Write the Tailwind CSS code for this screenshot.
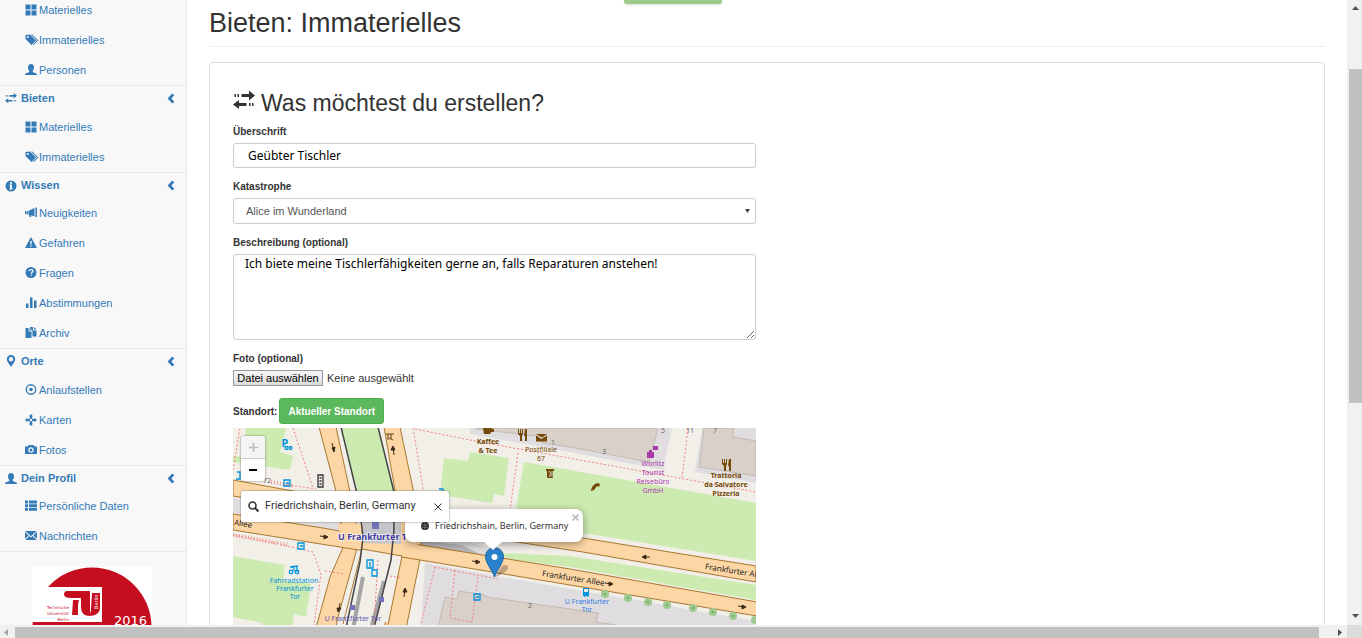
<!DOCTYPE html>
<html lang="de">
<head>
<meta charset="utf-8">
<title>Bieten: Immaterielles</title>
<script src="https://cdn.jsdelivr.net/npm/@tailwindcss/browser@4"></script>
</head>
<body class="flex h-screen flex-col overflow-hidden bg-white font-['Liberation_Sans',Arial,sans-serif] text-[11px] text-[#333]">

<svg class="hidden" aria-hidden="true">
  <symbol id="grid" viewBox="0 0 12 12"><path d="M.5.500h5v5h-5zM6.500.500h5v5h-5zM.5 6.500h5v5h-5zM6.500 6.500h5v5h-5z"/></symbol>
  <symbol id="tags" viewBox="0 0 14 12"><path fill-rule="evenodd" d="M.5 1 5 .5l6 6L6.500 11 .5 5zM2.700 2a1 1 0 1 0 .1 0z"/><path d="M6 .500h1.300l6 6L8.800 11l-.8-.6 3.900-3.900z"/></symbol>
  <symbol id="user" viewBox="0 0 12 12"><path d="M6 0C8 0 9 1.400 9 3.400 9 5 8.200 6.200 7.700 7v1l3.600 1.600c.5.300.7.800.7 1.400H0c0-.6.200-1.100.7-1.400L4.300 8V7C3.800 6.200 3 5 3 3.400 3 1.400 4 0 6 0z"/></symbol>
  <symbol id="transfer" viewBox="0 0 22 18"><path d="M1.500 3.500h1.500v3H1.500zM4.500 3.500H6v3H4.500zM8.500 3.500H16V0l6 5-6 5V6.500H8.500zM20.500 12.500H19v3h1.500zM17.500 12.500H16v3h1.500zM13.500 12.500H6V9.500L0 14l6 4.500v-3h7.500z"/></symbol>
  <symbol id="info" viewBox="0 0 12 12"><path fill-rule="evenodd" d="M6 .5a5.500 5.500 0 1 1 0 11 5.500 5.500 0 0 1 0-11zM5 2v1.700h2V2zM4.300 4.600v1H5v2.900h-.7v1h3.400v-1H7V4.600z"/></symbol>
  <symbol id="horn" viewBox="0 0 12 12"><path d="M0 4h1v3H0zM1.500 4H3v3.500H1.500zM3.500 3.700 9.500 1v8.500L6 8.300 6.300 10H4.600L4 7.500h-.5zM10.500.500H12V10h-1.500z"/></symbol>
  <symbol id="warn" viewBox="0 0 12 12"><path fill-rule="evenodd" d="M6 0 12 11H0zM5.200 4l.3 3.700h1l.3-3.700zM5.300 8.500v1.300h1.400V8.500z"/></symbol>
  <symbol id="quest" viewBox="0 0 12 12"><circle cx="6" cy="5.500" r="5.500"/><path d="M4 4.300C4 2 8 2 8 4c0 1.300-1.800 1.300-1.800 2.800M5.700 8.300h1" fill="none" stroke="#f8f8f8" stroke-width="1.300"/></symbol>
  <symbol id="bars" viewBox="0 0 12 12"><path d="M1 6.500h2.500V11H1zM5 .500h2.500V11H5zM9 3.500h2.500V11H9z"/></symbol>
  <symbol id="dup" viewBox="0 0 12 12"><path d="M.5 1h3v3.500h3V11h-6zM4.300 1l2.200 2.500H4.300zM5 0h3v3.500h3.500V9.500h-4V4L5 1zM9 0l2.500 2.500H9z"/></symbol>
  <symbol id="pin" viewBox="0 0 12 12"><path fill-rule="evenodd" d="M6 0a4.200 4.200 0 0 1 4.200 4.200C10.200 7 7 9.500 6 12 5 9.500 1.800 7 1.800 4.200A4.200 4.200 0 0 1 6 0zm0 2a2.200 2.200 0 1 0 0 4.400A2.200 2.200 0 0 0 6 2z"/></symbol>
  <symbol id="record" viewBox="0 0 12 12"><circle cx="6" cy="5.500" r="4.700" fill="none" stroke="currentColor" stroke-width="1.400"/><circle cx="6" cy="5.500" r="1.800"/></symbol>
  <symbol id="move" viewBox="0 0 12 12"><path fill-rule="evenodd" d="M6 0 8.200 2.400H7V4a2.500 2.500 0 0 1 1 1h1.600V3.800L12 6 9.600 8.200V7H8a2.500 2.500 0 0 1-1 1v1.600h1.200L6 12 3.800 9.600H5V8a2.500 2.500 0 0 1-1-1H2.400v1.200L0 6l2.400-2.200V5H4a2.500 2.500 0 0 1 1-1V2.400H3.800zM6 4.800a1.200 1.200 0 1 0 0 2.400 1.200 1.200 0 0 0 0-2.400z"/></symbol>
  <symbol id="camera" viewBox="0 0 12 12"><path fill-rule="evenodd" d="M0 2.500h2.500L3.700 1h4.600l1.200 1.500H12V10H0zM6 3.300a2.700 2.700 0 1 0 0 5.400 2.700 2.700 0 0 0 0-5.400zM6 4.500a1.500 1.500 0 1 1 0 3 1.500 1.500 0 0 1 0-3z"/></symbol>
  <symbol id="list" viewBox="0 0 12 12"><path d="M0 .500h3v3H0zM4 .500h8v3H4zM0 4.200h3V7H0zM4 4.200h8V7H4zM0 7.700h3v3H0zM4 7.700h8v3H4z"/></symbol>
  <symbol id="mail" viewBox="0 0 12 12"><path d="M.3 1h11.400L6 6.300zM0 2l3.700 3.400L0 8.700zM12 2 8.300 5.400 12 8.700zM4.400 6 6 7.500 7.600 6l4.100 4H.3z"/></symbol>
  <symbol id="chev" viewBox="0 0 8 12"><path d="M6.500 1.500 2.300 6l4.200 4.500" fill="none" stroke="currentColor" stroke-width="3"/></symbol>
</svg>

<div class="flex min-h-0 flex-1">
  <nav class="w-[187px] shrink-0 overflow-hidden border-r border-[#e7e7e7] bg-[#f8f8f8] text-[#337ab7]">
    <ul class="-mt-[5px]">
      <li><a href="#" class="flex h-[30px] items-center gap-[2px] pl-[25px]"><svg class="size-3 fill-current"><use href="#grid"/></svg>Materielles</a></li>
      <li><a href="#" class="flex h-[30px] items-center pl-[25px]"><svg class="h-3 w-[14px] fill-current"><use href="#tags"/></svg>Immaterielles</a></li>
      <li><a href="#" class="flex h-[30px] items-center gap-[2px] pl-[25px]"><svg class="size-3 fill-current"><use href="#user"/></svg>Personen</a></li>
    </ul>
    <section class="border-t border-[#e7e7e7]">
      <a href="#" class="flex h-[26px] items-center gap-1 pr-[11px] pb-[2px] pl-[5px] font-bold"><svg class="size-3 fill-current"><use href="#transfer"/></svg>Bieten<svg class="ml-auto h-[11px] w-2"><use href="#chev"/></svg></a>
      <ul>
        <li><a href="#" class="flex h-[30px] items-center gap-[2px] pl-[25px]"><svg class="size-3 fill-current"><use href="#grid"/></svg>Materielles</a></li>
        <li><a href="#" class="flex h-[30px] items-center pl-[25px]"><svg class="h-3 w-[14px] fill-current"><use href="#tags"/></svg>Immaterielles</a></li>
      </ul>
    </section>
    <section class="border-t border-[#e7e7e7]">
      <a href="#" class="flex h-[25px] items-center gap-1 pr-[11px] pl-[5px] font-bold"><svg class="size-3 fill-current"><use href="#info"/></svg>Wissen<svg class="ml-auto h-[11px] w-2"><use href="#chev"/></svg></a>
      <ul>
        <li><a href="#" class="flex h-[30px] items-center gap-[2px] pl-[25px]"><svg class="size-3 fill-current"><use href="#horn"/></svg>Neuigkeiten</a></li>
        <li><a href="#" class="flex h-[30px] items-center gap-[2px] pl-[25px]"><svg class="size-3 fill-current"><use href="#warn"/></svg>Gefahren</a></li>
        <li><a href="#" class="flex h-[30px] items-center gap-[2px] pl-[25px]"><svg class="size-3 fill-current"><use href="#quest"/></svg>Fragen</a></li>
        <li><a href="#" class="flex h-[30px] items-center gap-[2px] pl-[25px]"><svg class="size-3 fill-current"><use href="#bars"/></svg>Abstimmungen</a></li>
        <li><a href="#" class="flex h-[30px] items-center gap-[2px] pl-[25px]"><svg class="size-3 fill-current"><use href="#dup"/></svg>Archiv</a></li>
      </ul>
    </section>
    <section class="border-t border-[#e7e7e7]">
      <a href="#" class="flex h-[26px] items-center gap-1 pr-[11px] pb-[2px] pl-[5px] font-bold"><svg class="size-3 fill-current"><use href="#pin"/></svg>Orte<svg class="ml-auto h-[11px] w-2"><use href="#chev"/></svg></a>
      <ul>
        <li><a href="#" class="flex h-[30px] items-center gap-[2px] pl-[25px]"><svg class="size-3 fill-current"><use href="#record"/></svg>Anlaufstellen</a></li>
        <li><a href="#" class="flex h-[30px] items-center gap-[2px] pl-[25px]"><svg class="size-3 fill-current"><use href="#move"/></svg>Karten</a></li>
        <li><a href="#" class="flex h-[30px] items-center gap-[2px] pl-[25px]"><svg class="size-3 fill-current"><use href="#camera"/></svg>Fotos</a></li>
      </ul>
    </section>
    <section class="border-y border-[#e7e7e7]">
      <a href="#" class="flex h-[25px] items-center gap-1 pr-[11px] pl-[5px] font-bold"><svg class="size-3 fill-current"><use href="#user"/></svg>Dein Profil<svg class="ml-auto h-[11px] w-2"><use href="#chev"/></svg></a>
      <ul>
        <li><a href="#" class="flex h-[30px] items-center gap-[2px] pl-[25px]"><svg class="size-3 fill-current"><use href="#list"/></svg>Persönliche Daten</a></li>
        <li><a href="#" class="flex h-[30px] items-center gap-[2px] pl-[25px]"><svg class="size-3 fill-current"><use href="#mail"/></svg>Nachrichten</a></li>
      </ul>
    </section>
    <svg class="mt-[15px] ml-8 h-[120px] w-[120px]" viewBox="0 0 120 120" role="img" aria-label="Technische Universität Berlin 2016">
      <rect width="120" height="120" fill="#fff"/>
      <circle cx="60" cy="60" r="59.500" fill="#c50e1f"/>
      <path d="M0 20h70v35H0z" fill="#fff"/>
      <path d="M35 24h23v25q-9 0-9-9V31h-9q-8 0-8-3.500Q32 24 35 24zM41 33h6q-1 3-1 6v9h-6zM60 26h8v14q0 9-12 9 3-2 3-7z" fill="#c50e1f"/>
      <g fill="#c50e1f" font-family="DejaVu Sans, sans-serif" font-size="4" text-anchor="end"><text x="37" y="42">Technische</text><text x="37" y="48">Universität</text><text x="37" y="54">Berlin</text></g>
      <text transform="translate(66 42) rotate(-90)" font-size="5" fill="#fff" font-family="DejaVu Sans, sans-serif">Berlin</text>
      <text x="82" y="58" font-size="13" fill="#fff" font-family="DejaVu Sans, sans-serif">2016</text>
    </svg>
  </nav>

  <main class="relative min-w-0 flex-1 overflow-hidden px-[22px]">
    <div class="absolute top-0 left-[437px] h-1 w-[98px] rounded-b-[3px] bg-[#9ccb8c] shadow"></div>
    <h1 class="flex h-[47px] items-center border-b border-[#eee] text-[27px]">Bieten: Immaterielles</h1>
    <div class="mt-[15px] rounded-[4px] border border-[#ddd] px-[23px] pt-[24px] pb-6">
      <form class="max-w-[523px]" onsubmit="return false">
        <h2 class="flex h-8 items-center gap-[6px] text-[23px]"><svg class="-mt-2 h-[19px] w-[22px] fill-current"><use href="#transfer"/></svg>Was möchtest du erstellen?</h2>

        <label for="title" class="flex h-6 items-center text-[10px] font-bold">Überschrift</label>
        <input id="title" type="text" value="Geübter Tischler" class="block h-[25px] w-full rounded-[3px] border border-[#ccc] px-[14px] font-['Noto_Sans',sans-serif] text-[12px] text-black">

        <label for="kat" class="mt-[6px] flex h-6 items-center text-[10px] font-bold">Katastrophe</label>
        <div class="relative">
          <select id="kat" class="block h-[26px] w-full appearance-none rounded-[3px] border border-[#ccc] bg-white px-3 text-[#555]"><option>Alice im Wunderland</option></select>
          <svg class="pointer-events-none absolute top-[11px] right-[6px] h-[4px] w-[5px]" viewBox="0 0 5 4"><path d="M0 0h5L2.500 4z" fill="#444"/></svg>
        </div>

        <label for="desc" class="mt-[6px] flex h-6 items-center text-[10px] font-bold">Beschreibung (optional)</label>
        <textarea id="desc" class="block h-[86px] w-full rounded-[3px] border border-[#ccc] px-[11px] py-0 font-['Noto_Sans',sans-serif] text-[12px] leading-[17px] text-black">Ich biete meine Tischlerfähigkeiten gerne an, falls Reparaturen anstehen!</textarea>

        <label for="foto" class="mt-[6px] flex h-6 items-center text-[10px] font-bold">Foto (optional)</label>
        <div class="flex h-4 items-center gap-1">
          <input id="foto" type="file" class="sr-only">
          <button type="button" onclick="document.getElementById('foto').click()" class="h-4 w-[90px] border border-[#999] bg-linear-to-b from-[#f6f6f6] to-[#dcdcdc] leading-[14px] whitespace-nowrap text-black">Datei auswählen</button>
          <span>Keine ausgewählt</span>
        </div>

        <div class="mt-3 flex items-center gap-[2px] text-[10px] font-bold">
          <span>Standort:</span>
          <button type="button" class="h-[26px] rounded-[3px] border border-[#4cae4c] bg-[#5cb85c] px-2 text-white">Aktueller Standort</button>
        </div>

        <div class="relative mt-1 h-[300px] w-full overflow-hidden bg-[#f2efe9]">
          <svg class="block h-[300px] w-[523px]" viewBox="233 428 523 300" font-family="Noto Sans, sans-serif" text-anchor="middle">
            <g fill="#cdebb0">
              <path d="M246 428h40l-6 24 13 4-3 14-57-8v-6l10 1zM341 428h37l17 64h-37zM444 458l24 3 2-9 39 6-5 38-10-2-2 9-52-8zM524 462l46 8 186 33v58l-173-28-67-25zM500 553l70 3 186 29v15l-186-33-70-9zM233 556l52 9-2 15 28 4-5 33-12-3-2 14h-30v-5l-29-6zM233 499l30 4v3l-30-5z"/>
            </g>
            <g fill="#dfdde0">
              <path d="M470 428h202l-9 42-93-18-100-18zM702 428h54v55l-61-11zM425 563l65 12 266 46v107H415zM233 498l127 24v16l-127-25zM380 528l60 6 50 14v8l-90-14zM350 515h58v30h-58z"/>
            </g>
            <g fill="#bab9bd"><path d="M353 492h48v28h-48zM417 540l45 5 20 10-65-8z"/></g>
            <g fill="#d9d0c9" stroke="#bfb3aa" stroke-width=".8">
              <path d="M478 428h180l-9 34-79-15-28-4 2-6-68-8zM704 428h29v9l23 4v35l-57-9zM445 597l12 2 2-8 25 4 3 2 111 16-2 9 20 3-3 103H415z"/>
            </g>
            <g fill="#fcd6a4" stroke="#a06b1f" stroke-width=".9">
              <path d="M319 427h17l19 88 3 30-20 72-8 40h-22l22-80 14-32-7-50zM384 427h16l13 62 9 60-15 75-8 40h-22l16-80 9-38-6-50z"/>
              <path d="M233 480l120 22 60 13 170 23 173 28v16l-173-30-180-27-170-29z"/>
              <path d="M233 514l90 14 60 11 187 30 187 33v14l-187-31-180-30-157-25z"/>
            </g>
            <path d="M337 524h79l2 24-73-1z" fill="#fcd6a4"/>
            <path d="M364 494h37v50l-39-1z" fill="#c6c5c9"/>
            <path d="M362 549l40 7-14 66h-35l-5-4z" fill="#f2efe9"/>
            <path d="M343 624l19-75 40 7-14 69" fill="none" stroke="#a06b1f" stroke-width=".9"/>
            <g fill="none" stroke="#a6a5a5" stroke-width="4"><path d="M363 577l-10 52M384 581l-13 48"/></g>
            <g fill="none" stroke="#444" stroke-width="1.500">
              <path d="M341 427l18 75 4 35-3 25-14 66M378 427l16 65v38l-3 30-17 68"/>
            </g>
            <g fill="none" stroke="#f48080" stroke-width="1" stroke-dasharray="2 2">
              <path d="M293 428l20 60M233 470l7-42M283 484l33 5M413 428l12 72M415 429l60 12 281 51M518 453l-8 57M688 428l-6 50M233 535l50 10 30 7 8 22-7 51M325 571l20 3M434 567l64 12M435 567l-15 60M478 577l-6 45M455 570l-5 48 22 4M390 576l12 2M378 560l-4 65"/>
            </g>
            <path d="M271 482l22 4M233 535l56 10" stroke="#e99" stroke-width="4" stroke-dasharray="1 2" fill="none"/>
            <g fill="#7472b8"><path d="M372 522h7v7h-7zM350 605h5v5h-5zM379 597h5v5h-5z"/></g>
            <g fill="#9cca8f"><circle cx="605" cy="594" r="4"/><circle cx="628" cy="598" r="4"/><circle cx="648" cy="602" r="4"/><circle cx="667" cy="605" r="4"/><circle cx="693" cy="608" r="4"/><circle cx="713" cy="612" r="4"/><circle cx="733" cy="616" r="4"/><circle cx="755" cy="620" r="4"/></g>
            <g fill="#6b9c62"><circle cx="605" cy="594" r="1"/><circle cx="628" cy="598" r="1"/><circle cx="648" cy="602" r="1"/><circle cx="667" cy="605" r="1"/><circle cx="693" cy="608" r="1"/><circle cx="713" cy="612" r="1"/><circle cx="733" cy="616" r="1"/></g>
            <!-- one-way arrows -->
            <g stroke="#3a2a16" fill="#3a2a16" stroke-width="1">
              <path d="M332 443l2 8m-2-3l2 4 1-5zM394 455l-1-8m-2 3l2-4 2 4zM320 536l7 1m-3-2l4 2-4 2zM340 603l-1 8m-2-3l1 4 3-4zM404 597l1-8m-2 3l2-4 2 4zM472 561l7 1m-3-2l4 2-4 2zM650 557h-7m3-2l-4 2 4 2zM605 583l7 1m-3-2l4 2-4 2zM738 606l7 1m-3-2l4 2-4 2z"/>
            </g>
            <!-- points of interest -->
            <g fill="#734a08">
              <path d="M483 428h9v1h2v3h-3l-1 2h-6zM518 429h1v4h1v-4h1v4h1v-4h1v5l-1 2v5h-2v-5l-2-2zM525 429h2v12h-2v-5h-1zM536 434h11l-5 3.500zM536 435.500l5.500 3.500 5.500-3.500v6h-11zM722 459h1v4h1v-4h1v4h1v-4h1v5l-1 2v5h-2v-5l-2-2zM729 459h2v12h-2v-5h-1zM546 469h8v2h-1v7h-6v-7h-1zM591 490q1-5 6-7l3 1-1 3-2-1-3 4-3 1z"/>
              <path d="M549 471l2 3-2 3M552 471v6" stroke="#f2efe9" stroke-width=".8" fill="none"/>
              <g font-size="7" font-weight="bold"><text x="488" y="444">Kaffee</text><text x="488" y="453">&amp; Tee</text><text x="726" y="478">Trattoria</text><text x="726" y="487">da Salvatore</text><text x="726" y="496">Pizzeria</text></g>
              <g font-size="7"><text x="541" y="452">Postfiliale</text><text x="541" y="461">67</text></g>
            </g>
            <path d="M318 475h5v12h-5zM319.500 478h2M319.500 481h2M319.500 484h2" fill="none" stroke="#333" stroke-width="1.300"/>
            <path d="M386 434h8M388 434v6M391 434v5M389 438l4 2" stroke="#633d12" fill="none"/>
            <g fill="#ac39ac"><path d="M647 452h7v6h-7zM649 450h3v2h-3zM653 446h5v4h-5z"/><g font-size="7"><text x="653" y="466">Worlitz</text><text x="653" y="475">Tourist</text><text x="653" y="484">Reisebüro</text><text x="653" y="493">GmbH</text></g></g>
            <g fill="#0092da">
              <text x="285" y="447" font-size="11" font-weight="bold">P</text>
              <g fill="none" stroke="#0092da" stroke-width="1.300"><circle cx="286.500" cy="448" r="1.500"/><circle cx="290.500" cy="448" r="1.500"/><circle cx="291" cy="572" r="1.800"/><circle cx="297" cy="572" r="1.800"/><path d="M291 567h3v4M290 567l8-1M297 567v5M237 472h3v7h-4M284 480h6v6h-6zM286 483h3M298 543h6v6h-6zM300 546h3M367 560h6v8h-6zM370 562v5M372 570h5v6h-5zM474 594h6v6h-6zM476 597h3M439 489h4v3"/></g>
              <path d="M583 588h6v8h-1v1h-1v-1h-2v1h-1v-1h-1zM584 589v3h4v-3z"/>
              <g font-size="7"><text x="294" y="583">Fahrradstation</text><text x="295" y="591">Frankfurter</text><text x="295" y="599">Tor</text></g>
              <g font-size="7" fill="#2f7ce0"><text x="587" y="604">U Frankfurter</text><text x="587" y="612">Tor</text></g>
            </g>
            <g fill="#5a59b8"><text x="377" y="540" font-size="9" font-weight="bold" fill="#3f3ea8" stroke="#fff" stroke-opacity=".6" stroke-width="2" paint-order="stroke">U Frankfurter Tor</text><text x="353" y="621" font-size="7">U Frankfurter Tor</text></g>
            <g fill="#222" font-size="8"><text transform="translate(573 581) rotate(9)">Frankfurter Allee</text><text transform="translate(736 574) rotate(9)">Frankfurter Allee</text><text transform="translate(240 526) rotate(9)">r Allee</text></g>
            <g fill="#666" font-size="7"><text x="604" y="454">3</text><text x="553" y="445">1</text><text x="663" y="433">5</text><text x="690" y="433">11</text><text x="715" y="433">7</text><text x="530" y="608">2</text><text x="267" y="483">72</text></g>
          </svg>

          <!-- zoom buttons -->
          <div class="absolute top-2 left-2 flex w-6 flex-col overflow-hidden rounded-[3px] bg-white shadow-[0_0_2px_rgba(0,0,0,.6)]">
            <button type="button" aria-label="Vergrößern" class="flex h-[23px] items-center justify-center border-b border-[#ccc] bg-[#f4f4f4]"><svg class="size-[9px]" viewBox="0 0 9 9"><path d="M0 4.500h9M4.500 0v9" stroke="#bbb" stroke-width="1.600"/></svg></button>
            <button type="button" aria-label="Verkleinern" class="flex h-[22px] items-center justify-center"><svg class="h-[2px] w-2" viewBox="0 0 8 2"><path d="M0 0h8v2H0z"/></svg></button>
          </div>

          <!-- marker and popup -->
          <svg class="absolute top-[118px] left-[250px] h-[32px] w-[34px]" viewBox="0 0 34 32"><path d="M12 31 19 20q6-3 6 2 0 4-13 9z" fill="#000" opacity=".25"/><path d="M11.500 31C9 24 2.500 17 2.500 10.500a9 9 0 0 1 18 0C20.500 17 14 24 11.500 31z" fill="#2a81cb" stroke="#2468a4"/><circle cx="11.500" cy="11" r="3" fill="#fff"/></svg>
          <div class="absolute top-[81px] left-[172px] flex h-[33px] w-[178px] items-center gap-[6px] rounded-[8px] bg-white pl-4 font-['Noto_Sans',sans-serif] text-[9px] shadow-[0_2px_8px_rgba(0,0,0,.4)]">
            <svg class="size-2" viewBox="0 0 8 8"><circle cx="4" cy="4" r="4" fill="#222"/><path d="M0 3h8M0 5.300h8M4 0v8" stroke="#aaa" stroke-width=".5"/></svg>
            <span class="whitespace-nowrap">Friedrichshain, Berlin, Germany</span>
            <button type="button" aria-label="Schließen" class="absolute top-[5px] right-1 size-[7px]"><svg class="size-[7px]" viewBox="0 0 7 7"><path d="M.5.5l6 6M6.500.5l-6 6" stroke="#bbb" stroke-width="1.700"/></svg></button>
          </div>
          <svg class="absolute top-[114px] left-[251px] h-[8px] w-[18px]" viewBox="0 0 18 8"><path d="M0 0h18L9 8z" fill="#fff"/></svg>

          <!-- address search -->
          <div class="absolute top-[63px] left-2 flex h-[31px] w-[208px] items-center gap-[6px] rounded-[2px] bg-white px-[7px] shadow-[0_0_2px_rgba(0,0,0,.6)]">
            <svg class="size-[11px] shrink-0" viewBox="0 0 11 11"><circle cx="4.500" cy="4.500" r="3.500" fill="none" stroke="#333" stroke-width="1.600"/><path d="M7 7l3.500 3.500" stroke="#333" stroke-width="2"/></svg>
            <input type="text" aria-label="Adresse suchen" value="Friedrichshain, Berlin, Germany" class="min-w-0 flex-1 font-[Roboto,sans-serif]">
            <button type="button" aria-label="Leeren" class="size-[8px] shrink-0"><svg class="size-[8px]" viewBox="0 0 8 8"><path d="M.5.5l7 7M7.500.5l-7 7" stroke="#333"/></svg></button>
          </div>
        </div>
      </form>
    </div>
  </main>

  <div class="flex w-[15px] shrink-0 flex-col items-end bg-[#f1f1f1]" aria-hidden="true">
    <svg class="mt-[6px] mr-[3px] h-[4px] w-[7px]" viewBox="0 0 7 4"><path d="M0 4h7L3.500 0z" fill="#505050"/></svg>
    <div class="mt-[59px] h-[334px] w-[13px] bg-[#c1c1c1]"></div>
    <svg class="mt-auto mr-[3px] mb-[7px] h-[4px] w-[7px]" viewBox="0 0 7 4"><path d="M0 0h7L3.500 4z" fill="#505050"/></svg>
  </div>
</div>

<div class="flex h-[13px] shrink-0 items-end bg-[#f1f1f1]" aria-hidden="true">
  <div class="flex h-[11px] w-[15px] items-center pl-1"><svg class="h-[7px] w-[4px]" viewBox="0 0 4 7"><path d="M4 0v7L0 3.500z" fill="#a3a3a3"/></svg></div>
  <div class="h-[11px] flex-1 bg-[#c1c1c1]"></div>
  <div class="flex h-[11px] w-[28px] items-center justify-end pr-[5px]"><svg class="h-[7px] w-[4px]" viewBox="0 0 4 7"><path d="M0 0v7l4-3.500z" fill="#505050"/></svg></div>
  <div class="h-[13px] w-[15px] bg-[#dcdcdc]"></div>
</div>
</body>
</html>
